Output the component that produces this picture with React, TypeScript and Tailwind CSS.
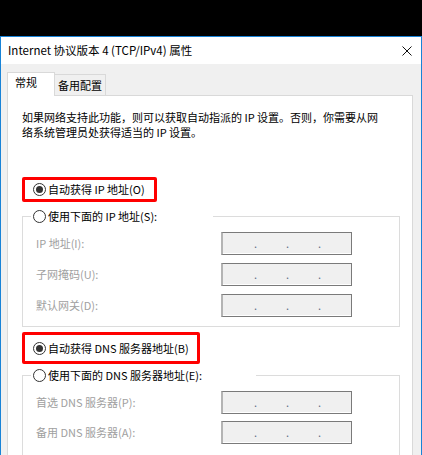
import React from 'react';

const FONT = "font-['Noto_Sans_CJK_SC','Noto_Sans',sans-serif]";

// Windows-style radio button
const Radio: React.FC<{ checked?: boolean }> = ({ checked }) => (
  <span className="flex h-[13px] w-[13px] shrink-0 items-center justify-center rounded-full border border-[#333333] bg-white">
    {checked && <span className="h-[7px] w-[7px] rounded-full bg-[#333333]" />}
  </span>
);

// Disabled IPv4 address box with three separator dots
const IpBox: React.FC = () => (
  <div className="h-[23px] w-[131px] border border-[#7a7a7a] border-l-2 border-l-[#b4b4b4] bg-[#f0f0f0] shadow-[inset_0_-1px_0_#ffffff]">
    <div className="flex h-full items-center gap-[30px] pl-[31px] text-[11px] leading-none text-[#5b6f86]">
      <span className="w-[2px]">.</span>
      <span className="w-[2px]">.</span>
      <span className="w-[2px]">.</span>
    </div>
  </div>
);

const FieldRow: React.FC<{ label: string }> = ({ label }) => (
  <div className="flex items-center">
    <span className="w-[185px] text-[#a0a0a0]">{label}</span>
    <IpBox />
  </div>
);

export default function App() {
  return (
    <div className={`h-[455px] w-[422px] overflow-hidden bg-black text-[11px] leading-[15px] text-black ${FONT}`}>
      <div className="h-[36px]" />

      {/* dialog window */}
      <div className="h-[419px] border-x border-t border-[#1883d7] bg-[#f0f0f0]">
        {/* title bar */}
        <div className="flex h-[27px] items-center justify-between bg-white pl-[7px] pr-[9px]">
          <span className="text-[11.5px]">Internet 协议版本 4 (TCP/IPv4) 属性</span>
          <svg width="10" height="10" viewBox="0 0 10 10">
            <path d="M0.5 0.5 L9.5 9.5 M9.5 0.5 L0.5 9.5" stroke="#111" strokeWidth="1" />
          </svg>
        </div>

        {/* tabs */}
        <div className="flex items-end pl-[6px] pt-[8px]">
          <div className="relative z-10 -mb-px h-[24px] w-[48px] border border-b-0 border-[#d9d9d9] bg-white pl-[7px] pt-[2px]">
            常规
          </div>
          <div className="h-[21px] w-[51px] border-r border-t border-[#d9d9d9] pl-[3px] pt-[3px]">备用配置</div>
        </div>

        {/* tab page */}
        <div className="ml-[6px] h-[400px] w-[406px] border border-[#d9d9d9] bg-white pl-[14px] pt-[14px]">
          <p className="whitespace-nowrap">
            如果网络支持此功能，则可以获取自动指派的 IP 设置。否则，你需要从网
            <br />
            络系统管理员处获得适当的 IP 设置。
          </p>

          <div className="mt-[37px] flex h-[25px] w-[135px] items-center gap-[2px] rounded-[2px] border-[3px] border-[#ff0000] pl-[8px]">
            <Radio checked />
            <span>自动获得 IP 地址(O)</span>
          </div>

          <fieldset className="mt-[6px] w-[378px] border border-[#dcdcdc] pb-[9px]">
            <legend className="ml-[8px] flex h-[16px] w-[182px] items-center gap-[2px] bg-white pl-[2px]">
              <Radio />
              <span>使用下面的 IP 地址(S):</span>
            </legend>
            <div className="mt-[8px] flex flex-col gap-[8px] pl-[13px]">
              <FieldRow label="IP 地址(I):" />
              <FieldRow label="子网掩码(U):" />
              <FieldRow label="默认网关(D):" />
            </div>
          </fieldset>

          <div className="mt-[5px] flex h-[32px] w-[178px] items-center gap-[2px] rounded-[2px] border-[3px] border-[#ff0000] pl-[8px]">
            <Radio checked />
            <span>自动获得 DNS 服务器地址(B)</span>
          </div>

          <fieldset className="mt-[3px] w-[378px] border border-[#dcdcdc] pb-[40px]">
            <legend className="ml-[8px] flex h-[16px] w-[225px] items-center gap-[2px] bg-white pl-[2px]">
              <Radio />
              <span>使用下面的 DNS 服务器地址(E):</span>
            </legend>
            <div className="mt-[8px] flex flex-col gap-[7px] pl-[13px]">
              <FieldRow label="首选 DNS 服务器(P):" />
              <FieldRow label="备用 DNS 服务器(A):" />
            </div>
          </fieldset>
        </div>
      </div>
    </div>
  );
}
